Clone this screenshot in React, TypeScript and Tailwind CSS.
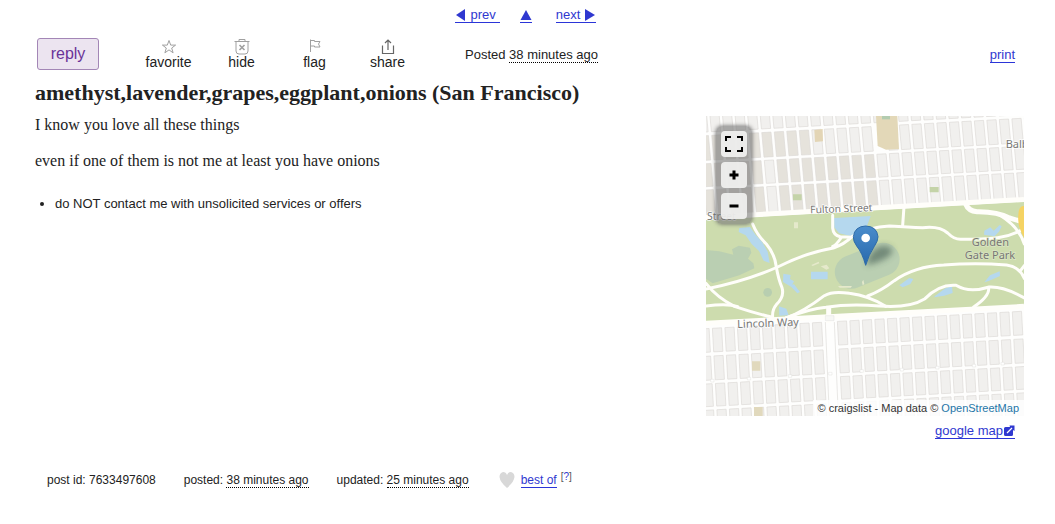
import type { ReactNode } from "react";

const linkClass = "border-b border-[#2b35d8] text-[#2f38d0]";

type Block = { points: string; fill: string };

function buildBlocks(
  rows: number[][],
  originX: number,
  originY: number,
  pitch: number,
  lean: number,
  tone: (row: number, x: number) => string | null,
): Block[] {
  const slope = -0.055;
  const blocks: Block[] = [];
  rows.forEach(([top, bottom], row) => {
    for (let k = -6; k < 28; k++) {
      const street = originX + pitch * k;
      const corner = (dx: number, y: number) => {
        const x = street + dx + (y + street * slope - originY) * lean;
        return `${x.toFixed(1)},${(y + x * slope).toFixed(1)}`;
      };
      const fill = tone(row, street);
      if (!fill) continue;
      blocks.push({
        fill,
        points: [corner(5, top), corner(pitch - 5, top), corner(pitch - 5, bottom), corner(5, bottom)].join(" "),
      });
    }
  });
  return blocks;
}

const northBlocks = buildBlocks(
  [[-30, 48], [59, 133], [143, 212], [222, 299]],
  165,
  80,
  37.7,
  0.09,
  (row, x) => {
    if (row === 1 && x > 495 && x < 530) return null;
    if (row === 0) return "#f1f0ee";
    if (row === 1) return x < 290 ? "#e6e3dc" : "#f1f0ee";
    return x < 490 && !(x > 130 && x < 170) ? "#e5e2db" : "#f1f0ee";
  },
);

const southBlocks = buildBlocks(
  [[638, 709], [721, 793], [804, 872], [883, 960]],
  16,
  670,
  37.6,
  0.055,
  (_row, x) => (x > 345 && x < 380 ? null : "#f1f0ee"),
);

function StreetMap() {
  return (
    <svg viewBox="0 0 954 900" className="block h-auto w-full" role="img" aria-label="Map of Golden Gate Park">
      <rect width="954" height="900" fill="#fefefd" />
      <g stroke="#dcdad6" strokeWidth="2">
        {northBlocks.map((b) => (
          <polygon key={b.points} points={b.points} fill={b.fill} />
        ))}
        {southBlocks.map((b) => (
          <polygon key={b.points} points={b.points} fill={b.fill} />
        ))}
      </g>
      <path d="M510 0 L574 0 L579 99 L540 101 L515 90 Z" fill="#e3d8b8" />
      <path d="M528 0h24v10h-24z" fill="#b3ccb0" />
      <path d="M325 42l25-3 1 37-24 2z" fill="#e3d5b5" />
      <path d="M261 235h26v18h-26zM671 213h27v16h-27z" fill="#c4d3a8" />
      <path d="M138 736h25v28h-25zM144 873h26v27h-26z" fill="#e1d9bd" />
      <g transform="translate(0 240)">
        <path d="M0 72 L954 18 V328 L0 377 Z" fill="#cddcae" />
        <path d="M0 162 L40 166 82 176 78 160 98 149 132 155 136 170 126 188 142 202 145 217 100 238 20 262 0 248Z" fill="#bacfb2" />
        <rect x="383" y="159" width="202" height="100" rx="50" transform="rotate(-22 484 210)" fill="#bacfb2" />
        <circle cx="185" cy="289" r="13" fill="#b8ceb0" />
        <g fill="#b5d8ee">
          <path d="M100 96l32-3 17 24 20 22 16 28 6 34-18-7-14-29-22-21-18-26-21-10z" />
          <path d="M384 66l110-6-12 32-48 28-35-8-14-18z" />
          <path d="M315 227h50v23h-50zM232 233l22 4-2 12 12 7-9 16-24-14zM251 268l13-3 18 23-8 4zM219 331l22 7 7 20-28 1z" />
          <path d="M580 268l30-22 12 3-9 15-23 10zM688 299l30-22 20-6 2 20-25 8-31 5zM835 259l17-21 29-12 1 14-34 15zM835 104l18-10 10 10 18-17 6 4-7 15-14 15-32-5z" />
        </g>
        <path d="M264 79h12v18h-12zM316 207l22-10 2 5-20 8zM344 211l18-5 8 11-9 4zM468 258l4-7 3 14-5 2zM396 270l42 0-4 5-33 0z" fill="#e5e9cb" />
        <g fill="none" stroke="#fffefa" strokeWidth="9" strokeLinejoin="round" strokeLinecap="round">
          <path d="M380 58V96Q382 118 403 122L435 124M380 151Q390 148 405 126M0 279Q120 255 215 213Q300 170 382 156Q415 145 438 122Q490 92 550 90Q610 94 650 95Q700 89 725 111Q745 131 765 130Q830 130 875 125Q910 121 945 103" />
          <path d="M594 32L590 88" />
          <path d="M140 84Q153 117 181 144Q207 175 211 213Q217 249 228 275Q236 302 211 326Q198 341 200 364" />
          <path d="M0 262Q30 302 85 331Q145 351 200 364" />
          <path d="M0 330Q65 321 95 332M240 366Q290 349 355 299Q380 284 430 292Q490 300 539 331" />
          <path d="M240 366Q310 339 360 334Q430 322 520 330Q610 337 657 308Q700 264 750 268Q789 292 850 273Q895 271 955 306" />
          <path d="M485 300Q525 285 565 254Q626 211 713 207Q809 200 902 207Q941 213 955 247M955 209L944 223M848 277Q850 301 803 333" />
          <path d="M882 58Q939 93 955 144" />
        </g>
        <path d="M779 24Q787 45 813 47Q874 46 910 66L945 76" fill="none" stroke="#fffefa" strokeWidth="15" />
        <path d="M0 64L954 10" stroke="#fffefa" strokeWidth="14" />
        <path d="M0 382L954 331" stroke="#fffefa" strokeWidth="15" />
        <path d="M368 336V380" stroke="#fffefa" strokeWidth="15" />
        <path d="M954 30Q938 29 937 56Q934 82 946 109L954 125Z" fill="#f5d363" />
      </g>
      <path d="M358 618L370 900M385 618L397 900" stroke="#dedcd9" strokeWidth="2" fill="none" />
      <path d="M358 599h26v15h-26z" fill="#f7f7f5" stroke="#d8d7d4" />
      <path d="M14 790h10v8H14zM124 784h10v8h-10zM247 776h10v8h-10zM368 769h10v8h-10zM462 761h10v8h-10zM583 757h10v8h-10zM689 751h10v8h-10zM799 745h10v8h-10zM885 739h10v8h-10z" fill="#fff" stroke="#d5d4d1" />
      <g fill="#777774" stroke="#fff" strokeWidth="4" paintOrder="stroke" fontFamily="'Noto Sans', sans-serif" fontSize="33">
        <text x="313" y="292" transform="rotate(-2 313 292)" fontSize="31">Fulton Street</text>
        <text x="3" y="312" fontSize="31">Street</text>
        <text x="94" y="636" transform="rotate(-2 94 636)">Lincoln Way</text>
        <text x="899" y="96">Balboa</text>
        <g textAnchor="middle" stroke="#dbe5c5">
          <text x="853" y="390">Golden</text>
          <text x="852" y="429">Gate Park</text>
        </g>
      </g>
      <defs>
        <linearGradient id="pin" x1="0" y1="0" x2="0" y2="1">
          <stop stopColor="#4a8ccb" />
          <stop offset="1" stopColor="#2869ad" />
        </linearGradient>
        <filter id="shade" x="-50%" y="-50%" width="200%" height="200%">
          <feGaussianBlur stdDeviation="9" />
        </filter>
      </defs>
      <path d="M480 448Q486 405 522 390Q556 386 560 405Q552 432 480 448Z" fill="#29443f" opacity=".5" filter="url(#shade)" />
      <path d="M479 448Q469 411 452 390Q441 375 442 362Q446 331 479 330Q513 331 516 362Q516 375 505 391Q488 416 479 448Z" fill="url(#pin)" stroke="#2e6ba8" strokeWidth="3" />
      <circle cx="479" cy="366" r="13" fill="#fff" />
    </svg>
  );
}

function MapButton({ label, children }: { label: string; children: ReactNode }) {
  return (
    <button type="button" aria-label={label} className="flex size-[26px] items-center justify-center rounded-sm bg-[#f3f3f2]/90">
      <svg viewBox="0 0 18 18" className="size-[18px]" fill="none" stroke="#000">
        {children}
      </svg>
    </button>
  );
}

function Action({ label, children }: { label: string; children: ReactNode }) {
  return (
    <button type="button" className="flex w-[73px] flex-col items-center pb-[2px] text-sm leading-3 text-[#222]">
      <svg viewBox="0 0 18 18" className="size-[18px]" fill="none" stroke="#a0a0a0">
        {children}
      </svg>
      {label}
    </button>
  );
}

function Ago({ children }: { children: ReactNode }) {
  return <time className="border-b border-dotted border-black">{children}</time>;
}

export default function App() {
  return (
    <div className="bg-white pb-8 font-['Liberation_Sans',Arial,sans-serif] text-[13px] leading-4 text-[#222]">
      <nav className="flex justify-center pt-[7px] pr-1 leading-[15px]">
        <a href="#prev" className={`flex items-center gap-1 pr-1 ${linkClass}`}>
          <svg viewBox="0 0 12 12" className="size-3" fill="#2f38d0"><path d="M1 6L10 0V12Z" /></svg>
          prev
        </a>
        <a href="#up" aria-label="Back to results" className={`mx-5 flex items-center ${linkClass}`}>
          <svg viewBox="0 0 12 12" className="size-3" fill="#2f38d0"><path d="M6 1L11.500 11H.5Z" /></svg>
        </a>
        <a href="#next" className={`ml-1 flex items-center gap-1 ${linkClass}`}>
          next
          <svg viewBox="0 0 12 12" className="size-3" fill="#2f38d0"><path d="M11 6L1 0V12Z" /></svg>
        </a>
      </nav>

      <header className="flex items-center pt-[15px] pr-10 pl-[37px]">
        <button type="button" className="mr-[33px] h-8 w-[62px] rounded-[3px] border border-[#a386b6] bg-[#ece4f0] text-base text-[#6a3398]">
          reply
        </button>
        <Action label="favorite">
          <path d="M9 2.5L10.7 7.1H15.6L11.7 10L13.1 14.8L9 11.9L4.900 14.8L6.3 10L2.4 7.1H7.3Z" />
        </Action>
        <Action label="hide">
          <path d="M1.500 3.500H16.500M6 3.500V1.500H12V3.500M3 3.500V13Q3 16 6 16H12Q15 16 15 13V3.500" />
          <path d="M6.500 7L11.500 12M11.500 7L6.500 12" strokeWidth="1.6" />
        </Action>
        <Action label="flag">
          <path d="M4.500 14V1.500M4.500 2.500H8.500V3.500H14L12.500 6L14 9H8.500V8H4.500" />
        </Action>
        <Action label="share">
          <path d="M3.500 7.500V15.500H14.500V7.500M9 12V2M6 5L9 2L12 5" stroke="#666" strokeWidth="1.2" />
        </Action>
        <p className="ml-[41px] pt-[2px]">
          Posted <Ago>38 minutes ago</Ago>
        </p>
        <p className="ml-auto pt-[2px]">
          <a href="#print" className={linkClass}>print</a>
        </p>
      </header>

      <h1 className="pt-2 pl-[35px] font-['Liberation_Serif',serif] text-[22px] leading-[30px] font-bold">
        amethyst,lavender,grapes,eggplant,onions (San Francisco)
      </h1>

      <main className="flex justify-between pt-2 pr-[31px] pl-[35px]">
        <section>
          <div className="space-y-[18px] font-['Liberation_Serif',serif] text-base leading-[18px]">
            <p>I know you love all these things</p>
            <p>even if one of them is not me at least you have onions</p>
          </div>
          <ul className="mt-[26px] list-disc pl-5">
            <li>do NOT contact me with unsolicited services or offers</li>
          </ul>
        </section>
        <aside className="w-[318px] shrink-0">
          <div className="relative overflow-hidden">
            <StreetMap />
            <div className="absolute top-[10px] left-[10px] flex flex-col gap-[5px] rounded-md bg-[#777]/60 p-[5px] shadow-[0_0_4px_#666]">
              <MapButton label="Full screen">
                <path d="M1 6V2H6M12 2H17V6M17 12V16H12M6 16H1V12" strokeWidth="2" />
              </MapButton>
              <MapButton label="Zoom in">
                <path d="M4.500 9H13.500M9 4.500V13.500" strokeWidth="3" />
              </MapButton>
              <MapButton label="Zoom out">
                <path d="M4.500 9H13.500" strokeWidth="3" />
              </MapButton>
            </div>
            <p className="absolute right-0 bottom-0 bg-white/80 px-[5px] text-[11px] leading-4 whitespace-nowrap text-[#333]">
              © craigslist - Map data © <a href="#osm" className="text-[#1f76a8]">OpenStreetMap</a>
            </p>
          </div>
          <div className="flex justify-end pt-2 pr-[9px]">
            <a href="#google" className={`flex items-center leading-[14px] ${linkClass}`}>
              google map
              <svg viewBox="0 0 12 12" className="size-3">
                <path d="M7 2H2.500Q1 2 1 3.500V9.500Q1 11 2.500 11H8.500Q10 11 10 9.500V5L11.500 6V.5H6.500Z" fill="#2f38d0" />
                <path d="M4 8L9 3" stroke="#fff" strokeWidth="1.3" />
              </svg>
            </a>
          </div>
        </aside>
      </main>

      <footer className="flex items-center gap-7 pt-[33px] pl-[47px] text-xs">
        <p>post id: 7633497608</p>
        <p>posted: <Ago>38 minutes ago</Ago></p>
        <p>updated: <Ago>25 minutes ago</Ago></p>
        <div className="flex items-center pl-[2px]">
          <svg viewBox="0 0 16 16" className="mr-[6px] size-4" fill="#d8d8d8">
            <path d="M8 16Q1 10 .5 5Q.5 1 4 0Q7 0 8 3Q9 0 12 0Q15.500 1 15.500 5Q15 10 8 16Z" />
          </svg>
          <a href="#best" className={`leading-[14px] ${linkClass}`}>best of</a>
          <a href="#help" className="ml-1 self-start text-[10px] leading-[10px] text-[#2f38d0]">
            <span className="text-[#555]">[</span>?<span className="text-[#555]">]</span>
          </a>
        </div>
      </footer>
    </div>
  );
}
